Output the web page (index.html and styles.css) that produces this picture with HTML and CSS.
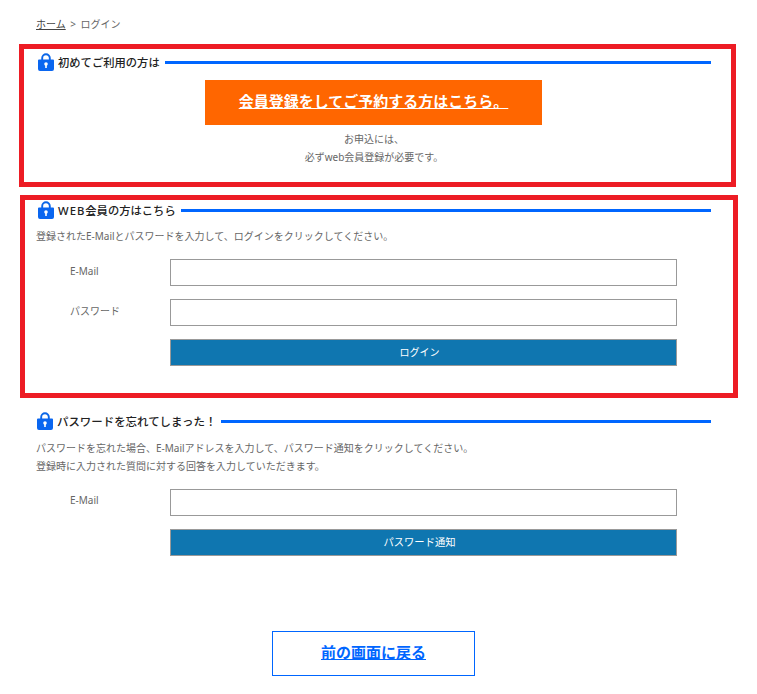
FILE: index.html

```html
<!DOCTYPE html>
<html lang="ja">
<head>
  <meta charset="UTF-8" />
  <title>ログイン</title>
  <link rel="stylesheet" href="styles.css">
</head>
<body>
  <svg class="defs" width="0" height="0">
    <symbol id="lock" viewBox="0 0 18 18">
      <path d="M5.2 8V5a3.8 3.8 0 0 1 7.600 0V8" fill="none" stroke="#0a66e8" stroke-width="1.9"/>
      <path d="M2 6.500h14a1 1 0 0 1 1 1V16a2 2 0 0 1-2 2H3a2 2 0 0 1-2-2V7.500a1 1 0 0 1 1-1z" fill="#0a66f0"/>
      <circle cx="9" cy="11" r="1.800" fill="#fff"/>
      <rect x="8.200" y="11" width="1.600" height="4" fill="#fff"/>
    </symbol>
  </svg>

  <p class="crumbs"><a href="#">ホーム</a> &gt; ログイン</p>

  <section class="box box-first">
    <h2 class="head"><svg class="lock"><use href="#lock"/></svg><span>初めてご利用の方は</span></h2>
    <a class="signup" href="#">会員登録をしてご予約する方はこちら。</a>
    <p class="note">お申込には、<br>必ずweb会員登録が必要です。</p>
  </section>

  <section class="box box-login">
    <h2 class="head"><svg class="lock"><use href="#lock"/></svg><span><span class="web">WEB</span>会員の方はこちら</span></h2>
    <p class="lead">登録されたE-Mailとパスワードを入力して、ログインをクリックしてください。</p>
    <div class="row"><label>E-Mail</label><input type="text"></div>
    <div class="row"><label>パスワード</label><input type="password"></div>
    <div class="row"><label></label><button>ログイン</button></div>
  </section>

  <section class="forgot">
    <h2 class="head"><svg class="lock"><use href="#lock"/></svg><span>パスワードを忘れてしまった！</span></h2>
    <p class="lead">パスワードを忘れた場合、E-Mailアドレスを入力して、パスワード通知をクリックしてください。<br>登録時に入力された質問に対する回答を入力していただきます。</p>
    <div class="row"><label>E-Mail</label><input type="text"></div>
    <div class="row"><label></label><button class="notify">パスワード通知</button></div>
  </section>

  <a class="back" href="#">前の画面に戻る</a>
</body>
</html>
```

FILE: styles.css

```css
* {
  box-sizing: border-box;
}
body {
  margin: 0;
  width: 757px;
  height: 694px;
  overflow: hidden;
  background: #fff;
  color: #666;
  font-family: "Noto Sans", "Noto Sans CJK JP", sans-serif;
  font-size: 10px;
}
.defs {
  position: absolute;
}
.crumbs {
  margin: 0;
  padding: 17px 0 0 36px;
  height: 44px;
  line-height: 14px;
  word-spacing: 2px;
}
.crumbs a {
  color: #444;
}
.box {
  border: 5px solid #ed1c24;
}
.box-first {
  width: 717px;
  height: 143px;
  margin-left: 19px;
}
.box-login {
  width: 718px;
  height: 203px;
  margin: 8px 0 0 20px;
}
.head {
  display: flex;
  align-items: center;
  margin: 0;
  height: 18px;
  font-size: 11.3px;
  font-weight: 500;
  color: #222;
}
.head::after {
  content: "";
  flex: 1;
  height: 3px;
  margin-left: 5px;
  background: #0066ff;
}
.web {
  letter-spacing: 1px;
}
.lock {
  width: 18px;
  height: 18px;
  margin-right: 3px;
  flex: none;
}
.box-first .head {
  margin: 4px 20px 0 13px;
}
.box-login .head {
  margin: 1px 22px 0 12px;
}
.signup {
  display: block;
  width: 337px;
  height: 45px;
  margin: 9px auto 0 181px;
  background: #ff6600;
  color: #fff;
  font-size: 15px;
  font-weight: 700;
  line-height: 42px;
  text-align: center;
}
.note {
  margin: 5px 0 0;
  padding-right: 7px;
  line-height: 18px;
  text-align: center;
}
.lead {
  margin: 8px 0 0 11px;
  line-height: 18px;
}
.row {
  display: flex;
  align-items: flex-start;
  margin-left: 11px;
  margin-top: 13px;
}
.lead + .row {
  margin-top: 14px;
}
.row label {
  width: 134px;
  padding: 3px 0 0 34px;
  line-height: 18px;
}
.row input,
.row button {
  width: 507px;
  height: 27px;
  border: 1px solid #999;
  border-radius: 0;
  padding: 0;
  font-family: inherit;
  font-size: 10px;
}
.row input {
  background: #fff;
}
.row button {
  padding: 0 8px 2px 0;
  background: #0f76b0;
  color: #fff;
}
.row .notify {
  font-size: 10.3px;
}
.forgot {
  margin: 14px 46px 0 36px;
}
.forgot .head {
  margin-right: 0;
  font-size: 11.45px;
}
.forgot .lead {
  margin-left: 0;
  margin-top: 9px;
}
.forgot .row {
  margin-left: 0;
}
.forgot .row label {
  padding-top: 2px;
}
.back {
  display: block;
  width: 203px;
  height: 45px;
  margin: 75px 0 0 272px;
  border: 1px solid #0066ff;
  color: #0066ff;
  font-size: 15px;
  font-weight: 700;
  line-height: 40px;
  text-align: center;
}
```
